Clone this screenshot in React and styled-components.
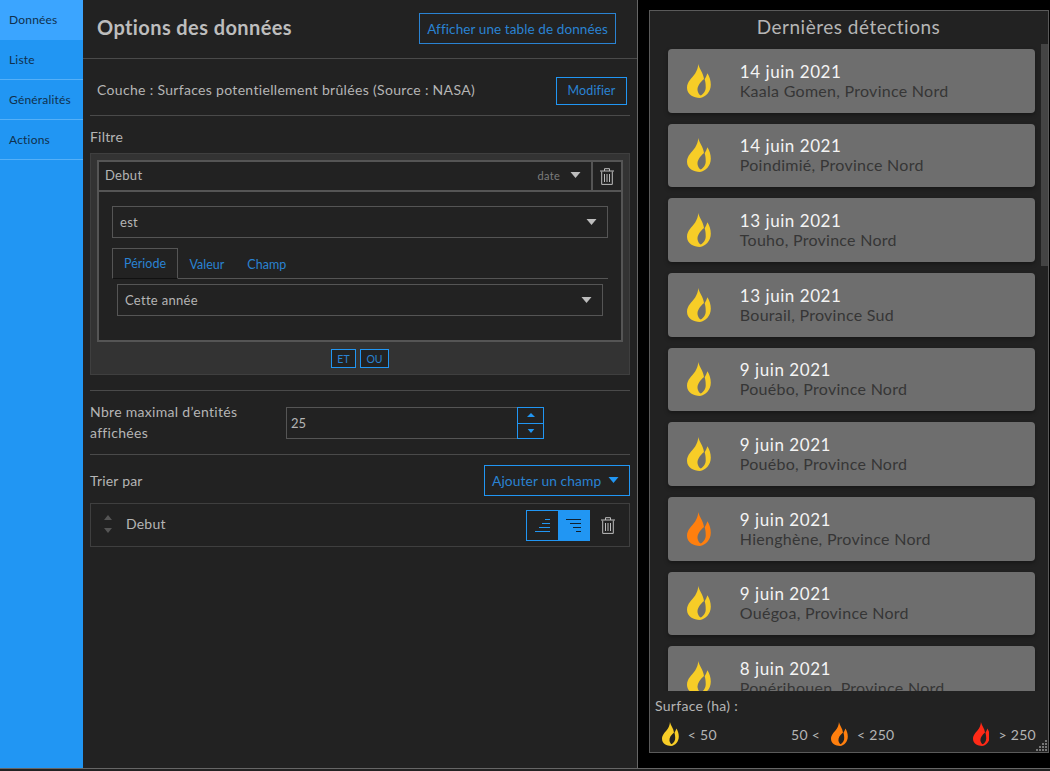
import React from "react";
import styled, { createGlobalStyle } from "styled-components";

const blue = "#2196f3";
const blueText = "#2a83d3";
const line = "#4a4a4a";

const GlobalStyle = createGlobalStyle`
  html, body {
    margin: 0;
    padding: 0;
    height: 771px;
    overflow: hidden;
    background: #222;
    font-family: Lato, "Open Sans", sans-serif;
  }
  * { box-sizing: border-box; }
`;

const Page = styled.div`
  display: flex;
  width: 1050px;
  height: 769px;
  border-bottom: 1px solid #666;
`;

const Sidebar = styled.nav`
  width: 83px;
  flex: none;
  background: ${blue};
`;

const NavItem = styled.div`
  height: 40px;
  padding-left: 9px;
  display: flex;
  align-items: center;
  font-size: 12px;
  letter-spacing: 0.2px;
  color: #10304d;
  background: ${p => (p.$active ? "#3ba5ff" : blue)};
  border-bottom: 1px solid ${p => (p.$active ? "#3ba5ff" : "#55b0f8")};
`;

const Panel = styled.main`
  width: 555px;
  flex: none;
  background: #222;
  border-right: 1px solid #666;
  color: #b5b5b5;
`;

const Header = styled.header`
  height: 59px;
  padding: 0 21px 1px 14px;
  display: flex;
  align-items: center;
  justify-content: space-between;
  border-bottom: 1px solid ${line};
`;

const Title = styled.h1`
  margin: 0 0 4px;
  font-size: 20px;
  font-weight: 700;
  letter-spacing: 0.4px;
  color: #bdbdbd;
`;

const OutlineButton = styled.button`
  height: ${p => p.$h || 28}px;
  width: ${p => p.$w}px;
  padding: 0;
  background: transparent;
  border: 1px solid ${p => p.$border || blue};
  color: ${blueText};
  font-family: inherit;
  font-size: ${p => p.$size || 13.5}px;
  letter-spacing: 0.1px;
`;

const Body = styled.div`
  padding: 0 7px;
`;

const LayerRow = styled.div`
  height: 57px;
  padding: 7px 3px 0 7px;
  display: flex;
  align-items: center;
  justify-content: space-between;
  border-bottom: 1px solid ${line};
  font-size: 14px;
  letter-spacing: 0.32px;
`;

const LayerName = styled.span`
  margin-bottom: 2px;
`;

const SectionLabel = styled.div`
  height: 37px;
  padding-top: 4px;
  display: flex;
  align-items: center;
  font-size: 14px;
  letter-spacing: 0.2px;
`;

const FilterBox = styled.section`
  height: 222px;
  padding: 6px 6px 0;
  background: #333;
  border: 1px solid #3f3f3f;
`;

const FieldRow = styled.div`
  display: flex;
  height: 32px;
  border: 2px solid #555;
  border-bottom: 0;
  background: #222;
`;

const FieldName = styled.div`
  flex: 1;
  padding: 0 10px 2px 6px;
  display: flex;
  align-items: center;
  font-size: 13px;
  letter-spacing: 0.3px;
  border-bottom: 2px solid #555;
`;

const FieldType = styled.span`
  margin-left: auto;
  margin-right: 10px;
  font-size: 11px;
  color: #7d7d7d;
`;

const TrashCell = styled.div`
  width: 30px;
  flex: none;
  display: flex;
  align-items: center;
  justify-content: center;
  border-left: 2px solid #555;
  border-bottom: 2px solid #555;
`;

const FieldBody = styled.div`
  height: 150px;
  padding: 14px 13px 0;
  background: #222;
  border: 2px solid #555;
  border-top: 0;
`;

const Select = styled.div`
  height: 32px;
  margin: ${p => p.$margin || 0};
  padding: 0 10px 0 7px;
  display: flex;
  align-items: center;
  justify-content: space-between;
  border: 1px solid #555;
  font-size: 13px;
  letter-spacing: 0.3px;
`;

const Tabs = styled.div`
  display: flex;
  height: 31px;
  margin-top: 10px;
  border-bottom: 1px solid #555;
`;

const Tab = styled.div`
  height: 31px;
  padding: 0 ${p => (p.$active ? 11 : 10.5)}px;
  display: flex;
  align-items: center;
  font-size: 12.5px;
  color: ${blueText};
  border: 1px solid ${p => (p.$active ? "#555" : "transparent")};
  border-bottom: ${p => (p.$active ? "1px solid #111" : "0")};
`;

const Operators = styled.div`
  height: 33px;
  display: flex;
  align-items: center;
  justify-content: center;
  gap: 4px;
`;

const Operator = styled.button`
  width: ${p => p.$w}px;
  height: 19px;
  padding: 0;
  background: #222;
  border: 1px solid ${blue};
  color: ${blueText};
  font-family: inherit;
  font-size: 10.5px;
`;

const LimitRow = styled.div`
  height: 65px;
  margin-top: 15px;
  padding-top: 1px;
  display: flex;
  align-items: center;
  border-top: 1px solid ${line};
  border-bottom: 1px solid ${line};
`;

const LimitLabel = styled.div`
  width: 196px;
  flex: none;
  margin-bottom: 3px;
  font-size: 14px;
  line-height: 21px;
  letter-spacing: 0.3px;
`;

const NumberInput = styled.div`
  width: 231px;
  height: 32px;
  padding-left: 4px;
  display: flex;
  align-items: center;
  border: 1px solid #555;
  border-right: 0;
  font-size: 13px;
`;

const Spinner = styled.div`
  width: 27px;
  height: 32px;
  display: flex;
  flex-direction: column;
`;

const SpinButton = styled.div`
  flex: 1;
  display: flex;
  align-items: center;
  justify-content: center;
  border: 1px solid ${blue};
  & + & { border-top: 0; }
`;

const SortHead = styled.div`
  height: 48px;
  padding-top: 2px;
  display: flex;
  align-items: center;
  justify-content: space-between;
  font-size: 14px;
  letter-spacing: 0.2px;
`;

const AddField = styled(OutlineButton)`
  display: flex;
  align-items: center;
  justify-content: space-between;
  padding: 0 10px 0 7px;
`;

const SortRow = styled.div`
  height: 44px;
  padding: 0 14px 0 13px;
  display: flex;
  align-items: center;
  border: 1px solid #3f3f3f;
  font-size: 14px;
  letter-spacing: 0.2px;
`;

const Handle = styled.div`
  width: 22px;
  margin-bottom: 2px;
  display: flex;
  flex-direction: column;
  gap: 8px;
`;

const SortName = styled.span`
  flex: 1;
  margin-bottom: 3px;
`;

const Toggle = styled.div`
  display: flex;
  width: 64px;
  height: 31px;
  margin-right: 11px;
  border: 1px solid ${blue};
`;

const ToggleButton = styled.div`
  flex: 1;
  display: flex;
  align-items: center;
  justify-content: center;
  background: ${p => (p.$active ? blue : "transparent")};
`;

const Right = styled.aside`
  flex: 1;
  min-width: 0;
  background: #000;
  padding: 10px 1px 15px 11px;
`;

const Widget = styled.div`
  position: relative;
  height: 100%;
  display: flex;
  flex-direction: column;
  background: #222;
  border: 1px solid #5a5a5a;
`;

const WidgetTitle = styled.h2`
  flex: none;
  height: 33px;
  margin: 0;
  padding: 0 1px 2px 0;
  display: flex;
  align-items: center;
  justify-content: center;
  font-size: 19px;
  font-weight: 400;
  letter-spacing: 0.5px;
  color: #b5b5b5;
`;

const Scroller = styled.div`
  flex: 1;
  min-height: 0;
  display: flex;
  overflow: hidden;
`;

const List = styled.div`
  flex: 1;
  min-width: 0;
  padding: 5px 6px 0 18px;
  display: flex;
  flex-direction: column;
  gap: 11px;
`;

const Card = styled.article`
  flex: none;
  height: 63.67px;
  padding-left: 19px;
  display: flex;
  align-items: center;
  background: #6e6e6e;
  border-radius: 4px;
  box-shadow: 0 2px 4px rgba(0, 0, 0, 0.35);
`;

const CardText = styled.div`
  margin-left: 29px;
`;

const CardDate = styled.div`
  font-size: 17px;
  line-height: 20px;
  letter-spacing: 0.55px;
  color: #f4f4f4;
`;

const CardPlace = styled.div`
  margin-top: -1px;
  font-size: 16px;
  line-height: 19px;
  letter-spacing: 0.27px;
  color: #363636;
`;

const ScrollTrack = styled.div`
  width: 7px;
  flex: none;
`;

const ScrollThumb = styled.div`
  height: 222px;
  background: #444;
`;

const Legend = styled.footer`
  flex: none;
  height: 61px;
  padding: 6px 12px 0 5px;
  background: #222;
  color: #b5b5b5;
  font-size: 14px;
  letter-spacing: 0.3px;
`;

const LegendRow = styled.div`
  margin-top: 8px;
  padding-left: 7px;
  display: flex;
  align-items: center;
  justify-content: space-between;
`;

const LegendItem = styled.div`
  display: flex;
  align-items: center;
  gap: 9px;
  margin-right: ${p => p.$shift || 0}px;
`;

const LegendLead = styled.span`
  margin-right: 2px;
`;

const ResizeGrip = styled.svg`
  position: absolute;
  right: 0;
  bottom: 0;
`;

const Flame = ({ color, size = 34 }) => (
  <svg width={size * 0.7} height={size} viewBox="0 0 70 100" style={{ flex: "none" }}>
    <path
      fill={color}
      d="M33 0C36 14 48 26 50 44C38 54 30 66 31 77C32 85 36 90 40 93C49 88 56 78 55 66C55 58 54 52 52 45C55 40 58 34 60 27C66 37 70 48 70 60C70 82 55 97 38 100C20 100 0 90 0 70C0 52 14 42 24 28C29 20 33 10 33 0Z"
    />
  </svg>
);

const Caret = ({ color = "#bdbdbd", w = 11, h = 6 }) => (
  <svg width={w} height={h} viewBox="0 0 10 6" style={{ flex: "none" }}>
    <path d="M0 0H10L5 6Z" fill={color} />
  </svg>
);

const CaretUp = ({ color, w = 8, h = 5 }) => (
  <svg width={w} height={h} viewBox="0 0 10 6" style={{ display: "block" }}>
    <path d="M0 6H10L5 0Z" fill={color} />
  </svg>
);

const Trash = () => (
  <svg width="14" height="17" viewBox="0 0 14 17" fill="none" stroke="#bdbdbd" strokeWidth="1">
    <path d="M0 3H14M4.5 3V0.7H9.5V3M1.7 3.5V16.4H12.3V3.5M4.5 6V14M7 6V14M9.5 6V14" />
  </svg>
);

const SortAsc = () => (
  <svg width="15" height="13" viewBox="0 0 15 13" stroke={blue} strokeWidth="1">
    <path d="M10 0.5H15M7 4.5H15M4 8.5H15M0 12.5H15" />
  </svg>
);

const SortDesc = () => (
  <svg width="15" height="13" viewBox="0 0 15 13" stroke="#10202e" strokeWidth="1">
    <path d="M0 0.5H15M4 4.5H15M7 8.5H15M10 12.5H15" />
  </svg>
);

const detections = [
  ["14 juin 2021", "Kaala Gomen, Province Nord", "#f7cd27"],
  ["14 juin 2021", "Poindimié, Province Nord", "#f7cd27"],
  ["13 juin 2021", "Touho, Province Nord", "#f7cd27"],
  ["13 juin 2021", "Bourail, Province Sud", "#f7cd27"],
  ["9 juin 2021", "Pouébo, Province Nord", "#f7cd27"],
  ["9 juin 2021", "Pouébo, Province Nord", "#f7cd27"],
  ["9 juin 2021", "Hienghène, Province Nord", "#ff7f0e"],
  ["9 juin 2021", "Ouégoa, Province Nord", "#f7cd27"],
  ["8 juin 2021", "Ponérihouen, Province Nord", "#f7cd27"]
];

const App = () => (
  <>
    <GlobalStyle />
    <Page>
      <Sidebar>
        <NavItem $active>Données</NavItem>
        <NavItem>Liste</NavItem>
        <NavItem>Généralités</NavItem>
        <NavItem>Actions</NavItem>
      </Sidebar>

      <Panel>
        <Header>
          <Title>Options des données</Title>
          <OutlineButton $w={197} $h={31} $border="#2a83d3">
            Afficher une table de données
          </OutlineButton>
        </Header>
        <Body>
          <LayerRow>
            <LayerName>Couche : Surfaces potentiellement brûlées (Source : NASA)</LayerName>
            <OutlineButton $w={71} $size={12.5}>Modifier</OutlineButton>
          </LayerRow>

          <SectionLabel>Filtre</SectionLabel>
          <FilterBox>
            <FieldRow>
              <FieldName>
                Debut
                <FieldType>date</FieldType>
                <Caret />
              </FieldName>
              <TrashCell>
                <Trash />
              </TrashCell>
            </FieldRow>
            <FieldBody>
              <Select>
                est
                <Caret />
              </Select>
              <Tabs>
                <Tab $active>Période</Tab>
                <Tab>Valeur</Tab>
                <Tab>Champ</Tab>
              </Tabs>
              <Select $margin="5px 5px 0">
                Cette année
                <Caret />
              </Select>
            </FieldBody>
            <Operators>
              <Operator $w={25}>ET</Operator>
              <Operator $w={29}>OU</Operator>
            </Operators>
          </FilterBox>

          <LimitRow>
            <LimitLabel>
              Nbre maximal d’entités
              <br />
              affichées
            </LimitLabel>
            <NumberInput>25</NumberInput>
            <Spinner>
              <SpinButton>
                <svg width="8" height="4" viewBox="0 0 8 4">
                  <path d="M0 4H8L4 0Z" fill={blue} />
                </svg>
              </SpinButton>
              <SpinButton>
                <Caret color={blue} w={8} h={4} />
              </SpinButton>
            </Spinner>
          </LimitRow>

          <SortHead>
            Trier par
            <AddField $w={146} $h={31} $size={13.8}>
              Ajouter un champ
              <Caret color={blue} />
            </AddField>
          </SortHead>
          <SortRow>
            <Handle>
              <CaretUp color="#555" />
              <Caret color="#555" w={8} h={5} />
            </Handle>
            <SortName>Debut</SortName>
            <Toggle>
              <ToggleButton>
                <SortAsc />
              </ToggleButton>
              <ToggleButton $active>
                <SortDesc />
              </ToggleButton>
            </Toggle>
            <Trash />
          </SortRow>
        </Body>
      </Panel>

      <Right>
        <Widget>
          <WidgetTitle>Dernières détections</WidgetTitle>
          <Scroller>
            <List>
              {detections.map(([date, place, color], i) => (
                <Card key={i}>
                  <Flame color={color} />
                  <CardText>
                    <CardDate>{date}</CardDate>
                    <CardPlace>{place}</CardPlace>
                  </CardText>
                </Card>
              ))}
            </List>
            <ScrollTrack>
              <ScrollThumb />
            </ScrollTrack>
          </Scroller>
          <Legend>
            Surface (ha) :
            <LegendRow>
              <LegendItem>
                <Flame color="#f7cd27" size={24} />
                &lt; 50
              </LegendItem>
              <LegendItem $shift={4}>
                <LegendLead>50 &lt;</LegendLead>
                <Flame color="#ff7f0e" size={24} />
                &lt; 250
              </LegendItem>
              <LegendItem>
                <Flame color="#ff2a17" size={24} />
                &gt; 250
              </LegendItem>
            </LegendRow>
          </Legend>
          <ResizeGrip width="12" height="12" viewBox="0 0 12 12" fill="#777">
            <path d="M9 0h2v2H9zM6 3h2v2H6zM9 3h2v2H9zM3 6h2v2H3zM6 6h2v2H6zM9 6h2v2H9zM0 9h2v2H0zM3 9h2v2H3zM6 9h2v2H6zM9 9h2v2H9z" />
          </ResizeGrip>
        </Widget>
      </Right>
    </Page>
  </>
);

export default App;
